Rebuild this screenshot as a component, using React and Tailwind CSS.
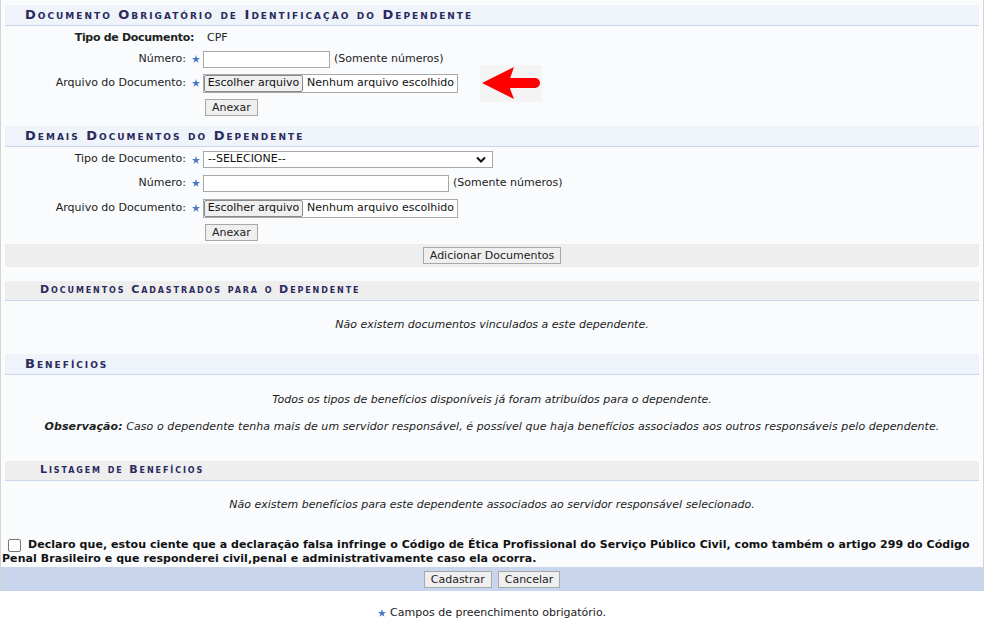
import React from "react";

const Star = () => (
  <svg width="8" height="8" viewBox="0 0 10 10" className="inline-block shrink-0">
    <polygon
      points="5,0 6.2,3.6 10,3.8 7,6.1 8.1,9.8 5,7.6 1.9,9.8 3,6.1 0,3.8 3.8,3.6"
      fill="#4a78c8"
    />
  </svg>
);

const Btn = ({ children }) => (
  <button className="h-[17px] px-[6px] bg-[#efefef] border border-[#a8a8a8] text-[11px] leading-[15px] text-[#222] whitespace-nowrap">
    {children}
  </button>
);

const FileInput = () => (
  <div className="w-[255px] h-[19px] border border-[#a8a8a8] bg-white flex items-center">
    <div className="h-[17px] w-[99px] shrink-0 bg-[#efefef] border border-[#8a8a8a] rounded-[2px] flex items-center justify-center text-[11px] text-[#111] whitespace-nowrap">
      Escolher arquivo
    </div>
    <span className="ml-[4px] text-[11px] text-[#111] whitespace-nowrap">Nenhum arquivo escolhido</span>
  </div>
);

const Label = ({ children, star = true, bold = false }) => (
  <div className={"w-[196px] shrink-0 flex items-center justify-end " + (star ? "pr-[1px]" : "pr-[7px]")}>
    <span className={bold ? "font-bold tracking-[-0.3px]" : ""}>{children}</span>
    {star && <span className="ml-[6px] flex items-center"><Star /></span>}
  </div>
);

const Caption = ({ children }) => (
  <div className="mx-[4px] h-[21px] bg-[#eff3fa] border-b border-[#c8d5ec] pl-[20px] flex items-center text-[13px] font-bold tracking-[2px] [font-variant:small-caps] text-[#2a2a5c] whitespace-nowrap">
    {children}
  </div>
);

const SubCaption = ({ children }) => (
  <div className="mx-[4px] h-[20px] bg-[#eeeeee] border-b border-[#c8d5ec] pl-[35px] flex items-center text-[11px] font-bold tracking-[1.9px] [font-variant:small-caps] text-[#2a2a5c] whitespace-nowrap">
    {children}
  </div>
);

const Arrow = () => (
  <div className="ml-[22px] w-[62px] h-[37px] bg-[#f4f4f4] flex items-center justify-center">
    <svg width="62" height="37" viewBox="0 0 62 37">
      <polygon points="2,18 34,2 30,13.5 30,23.5 34,34" fill="#ff0000" />
      <path d="M29 13 H55 A5 5 0 0 1 55 23 H29 Z" fill="#ff0000" />
    </svg>
  </div>
);

export default function App() {
  return (
    <div className="w-[984px] min-h-[622px] bg-white font-['DejaVu_Sans',Verdana,sans-serif] text-[11px] text-[#222]">
      <div className="bg-[#f9fbfd] border-x border-[#d4d4d4] pt-[5px]">
        {/* Section 1 */}
        <Caption>Documento Obrigatório de Identificação do Dependente</Caption>
        <div className="mx-[4px]">
          <div className="h-[24px] flex items-center">
            <Label star={false} bold>Tipo de Documento:</Label>
            <div className="ml-[6px]">CPF</div>
          </div>
          <div className="h-[18px] flex items-center">
            <Label>Número:</Label>
            <div className="ml-[2px] flex items-center">
              <div className="w-[127px] h-[17px] border border-[#a8a8a8] bg-white" />
              <span className="ml-[4px]">(Somente números)</span>
            </div>
          </div>
          <div className="h-[30px] flex items-center">
            <Label>Arquivo do Documento:</Label>
            <div className="ml-[2px] flex items-center">
              <FileInput />
              <Arrow />
            </div>
          </div>
          <div className="h-[20px] flex items-center">
            <div className="w-[196px] shrink-0" />
            <div className="ml-[4px]">
              <Btn>Anexar</Btn>
            </div>
          </div>
        </div>

        {/* Section 2 */}
        <div className="mt-[8px]">
          <Caption>Demais Documentos do Dependente</Caption>
        </div>
        <div className="mx-[4px]">
          <div className="h-[25px] flex items-center">
            <Label>Tipo de Documento:</Label>
            <div className="ml-[2px] w-[290px] h-[17px] border border-[#a8a8a8] bg-white flex items-center justify-between pl-[4px] pr-[6px]">
              <span className="text-[11px] text-[#111]">--SELECIONE--</span>
              <svg width="10" height="7" viewBox="0 0 10 7">
                <path d="M1 1.5 L5 5.5 L9 1.5" fill="none" stroke="#111" strokeWidth="2" />
              </svg>
            </div>
          </div>
          <div className="h-[22px] flex items-center">
            <Label>Número:</Label>
            <div className="ml-[2px] flex items-center">
              <div className="w-[246px] h-[17px] border border-[#a8a8a8] bg-white" />
              <span className="ml-[4px]">(Somente números)</span>
            </div>
          </div>
          <div className="h-[28px] flex items-center">
            <Label>Arquivo do Documento:</Label>
            <div className="ml-[2px]">
              <FileInput />
            </div>
          </div>
          <div className="h-[22px] flex items-center">
            <div className="w-[196px] shrink-0" />
            <div className="ml-[4px]">
              <Btn>Anexar</Btn>
            </div>
          </div>
          <div className="h-[23px] bg-[#eeeeee] flex items-center justify-center">
            <Btn>Adicionar Documentos</Btn>
          </div>
        </div>

        {/* Documentos cadastrados */}
        <div className="mt-[14px]">
          <SubCaption>Documentos Cadastrados para o Dependente</SubCaption>
        </div>
        <div className="mx-[4px] h-[48px] flex items-center justify-center italic">
          Não existem documentos vinculados a este dependente.
        </div>

        {/* Benefícios */}
        <div className="mt-[5px]">
          <Caption>Benefícios</Caption>
        </div>
        <div className="mx-[4px] pt-[18px] pb-[27px] text-center italic leading-[14px]">
          <div>Todos os tipos de benefícios disponíveis já foram atribuídos para o dependente.</div>
          <div className="mt-[13px] tracking-[0.08px]">
            <span className="font-bold">Observação:</span> Caso o dependente tenha mais de um servidor responsável, é possível que haja benefícios associados aos outros responsáveis pelo dependente.
          </div>
        </div>

        <SubCaption>Listagem de Benefícios</SubCaption>
        <div className="mx-[4px] pt-[17px] text-center italic leading-[14px]">
          Não existem benefícios para este dependente associados ao servidor responsável selecionado.
        </div>

        {/* Declaração */}
        <div className="mt-[26px] pl-[1px] font-bold leading-[14px] text-[#111] tracking-[0.06px]">
          <div className="flex items-center whitespace-nowrap">
            <span className="ml-[6px] mr-[7px] w-[13px] h-[13px] border border-[#767676] rounded-[2px] bg-white inline-block" />
            Declaro que, estou ciente que a declaração falsa infringe o Código de Ética Profissional do Serviço Público Civil, como também o artigo 299 do Código
          </div>
          <div className="whitespace-nowrap">
            Penal Brasileiro e que responderei civil,penal e administrativamente caso ela ocorra.
          </div>
        </div>

        <div className="mt-[1px] h-[24px] bg-[#c8d5ec] flex items-center justify-center gap-[6px]">
          <Btn>Cadastrar</Btn>
          <Btn>Cancelar</Btn>
        </div>
      </div>

      <div className="pt-[14px] flex items-center justify-center gap-[4px]">
        <Star />
        <span>Campos de preenchimento obrigatório.</span>
      </div>
    </div>
  );
}
